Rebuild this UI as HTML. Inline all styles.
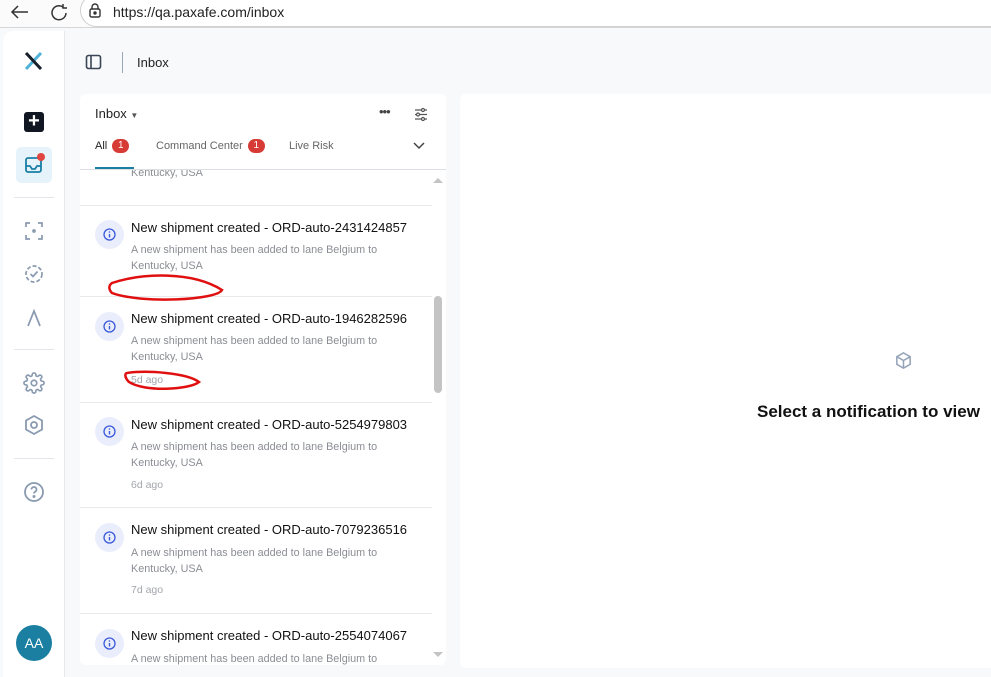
<!DOCTYPE html>
<html><head><meta charset="utf-8"><style>
*{box-sizing:border-box;margin:0;padding:0}
html,body{width:991px;height:677px;overflow:hidden}
body{background:#f8f9fb;font-family:"Liberation Sans",sans-serif;position:relative}
.abs{position:absolute}
.bar{left:0;top:0;width:991px;height:28px;background:#fbfbfb;border-bottom:1px solid #d6d6d6}
.url{left:80px;top:-6px;width:911px;height:33px;border:1px solid #d0d0d0;border-right:none;border-radius:17px 0 0 17px;background:#fff}
.side{left:3px;top:31px;width:62px;height:646px;background:#fff;border-right:1px solid #e6e8ec;border-top-left-radius:10px}
.sep{left:14px;width:40px;height:1px;background:#e3e6ea}
.panel{left:80px;top:94px;width:366px;height:571px;background:#fff;border-radius:6px;overflow:hidden}
.right{left:460px;top:94px;width:531px;height:574px;background:#fff;border-radius:6px 0 0 6px}
.item{position:absolute;left:0;width:352px;border-top:1px solid #e8e9ec}
.ic{position:absolute;left:15px;width:29px;height:29px;border-radius:50%;background:#eaedfc}
.ic svg{position:absolute;left:8px;top:8px}
.t{position:absolute;left:51px;font-size:13px;color:#111;white-space:nowrap}
.d{position:absolute;left:51px;font-size:10.8px;color:#8a8d93;line-height:16px;white-space:nowrap}
.a{position:absolute;left:51px;font-size:10.5px;color:#a3a6ab}
.badge{display:inline-block;width:17px;height:14px;border-radius:7px;background:#d63b36;color:#fff;font-size:10px;text-align:center;line-height:14px;vertical-align:1px;margin-left:5px}
</style></head><body>
<div class="abs bar"></div>
<div class="abs url"></div>
<svg class="abs" style="left:8px;top:3px" width="70" height="20" viewBox="0 0 70 20" fill="none" stroke="#333" stroke-width="1.5"><path d="M20 9H4M10 3L4 9l6 6"/><path d="M55 4a7 7 0 1 0 3 6" /><path d="M55 1v4h4"/></svg>
<svg class="abs" style="left:88px;top:3px" width="14" height="16" viewBox="0 0 14 16" fill="none" stroke="#333" stroke-width="1.4"><rect x="2" y="6" width="10" height="8" rx="1.5"/><path d="M4 6V4a3 3 0 0 1 6 0v2"/><circle cx="7" cy="10" r="1" fill="#333"/></svg>
<div class="abs" style="left:113px;top:4px;font-size:14px;color:#222">https://qa.paxafe.com/inbox</div>

<div class="abs side"></div>
<svg class="abs" style="left:24px;top:52px" width="20" height="18" viewBox="0 0 20 18"><path d="M17 1L2 17" stroke="#4fb3d9" stroke-width="3"/><path d="M2 1l15 16" stroke="#17202b" stroke-width="3"/></svg>
<div class="abs" style="left:24px;top:112px;width:20px;height:20px;background:#111722;border-radius:3px;color:#fff;font-size:20px;line-height:19px;text-align:center;font-weight:bold">+</div>
<div class="abs" style="left:16px;top:147px;width:36px;height:36px;background:#e6f3fa;border-radius:5px"></div>
<svg class="abs" style="left:24px;top:155px" width="22" height="20" viewBox="0 0 22 20" fill="none" stroke="#1a7fa5" stroke-width="1.8"><rect x="2" y="3" width="15" height="14" rx="2"/><path d="M2 11h4l2 3h3l2-3h4"/></svg>
<div class="abs" style="left:37px;top:153px;width:8px;height:8px;border-radius:50%;background:#e0463f"></div>
<div class="abs sep" style="top:197px"></div>
<svg class="abs" style="left:24px;top:221px" width="20" height="20" viewBox="0 0 20 20" fill="none" stroke="#8a9ab0" stroke-width="1.7"><path d="M2 6V2h4M14 2h4v4M18 14v4h-4M6 18H2v-4"/><circle cx="10" cy="10" r="1" fill="#8a9ab0"/></svg>
<svg class="abs" style="left:23px;top:263px" width="22" height="22" viewBox="0 0 22 22" fill="none" stroke="#8a9ab0" stroke-width="1.7"><circle cx="11" cy="11" r="8" stroke-dasharray="4 2"/><path d="M7.5 11l2.5 2.5 4.5-5"/></svg>
<svg class="abs" style="left:26px;top:309px" width="16" height="18" viewBox="0 0 16 18" fill="none" stroke="#8a9ab0" stroke-width="1.7"><path d="M2 17L8 2l6 15"/></svg>
<div class="abs sep" style="top:349px"></div>
<svg class="abs" style="left:23px;top:372px" width="22" height="22" viewBox="0 0 24 24" fill="none" stroke="#8a9ab0" stroke-width="1.8"><circle cx="12" cy="12" r="3"/><path d="M19.4 15a1.7 1.7 0 0 0 .3 1.8l.1.1a2 2 0 1 1-2.8 2.8l-.1-.1a1.7 1.7 0 0 0-2.9 1.2V21a2 2 0 1 1-4 0v-.1a1.7 1.7 0 0 0-2.9-1.2l-.1.1a2 2 0 1 1-2.8-2.8l.1-.1A1.7 1.7 0 0 0 3.1 14H3a2 2 0 1 1 0-4h.1a1.7 1.7 0 0 0 1.2-2.9l-.1-.1a2 2 0 1 1 2.8-2.8l.1.1A1.7 1.7 0 0 0 10 3.1V3a2 2 0 1 1 4 0v.1a1.7 1.7 0 0 0 2.9 1.2l.1-.1a2 2 0 1 1 2.8 2.8l-.1.1A1.7 1.7 0 0 0 20.9 10H21a2 2 0 1 1 0 4h-.1a1.7 1.7 0 0 0-1.5 1z"/></svg>
<svg class="abs" style="left:23px;top:414px" width="22" height="22" viewBox="0 0 22 22" fill="none" stroke="#8a9ab0" stroke-width="1.8"><path d="M11 2l8 4.5v9L11 20l-8-4.5v-9z"/><circle cx="11" cy="11" r="3"/></svg>
<div class="abs sep" style="top:458px"></div>
<svg class="abs" style="left:23px;top:481px" width="22" height="22" viewBox="0 0 22 22" fill="none" stroke="#8a9ab0" stroke-width="1.8"><circle cx="11" cy="11" r="9"/><path d="M8.5 8.5a2.5 2.5 0 1 1 3.5 2.3c-.7.4-1 .9-1 1.7"/><circle cx="11" cy="15.5" r=".6" fill="#8a9ab0"/></svg>
<div class="abs" style="left:16px;top:625px;width:36px;height:36px;border-radius:50%;background:#1a7fa0;color:#fff;font-size:14px;line-height:36px;text-align:center">AA</div>

<svg class="abs" style="left:85px;top:54px" width="18" height="17" viewBox="0 0 18 17" fill="none" stroke="#3a4556" stroke-width="1.6"><rect x="1.5" y="1.5" width="14" height="13" rx="2"/><path d="M6 1.5v13"/></svg>
<div class="abs" style="left:122px;top:52px;width:1px;height:21px;background:#9aa7b8"></div>
<div class="abs" style="left:137px;top:55px;font-size:13px;color:#222">Inbox</div>

<div class="abs right"></div>
<svg class="abs" style="left:894px;top:351px" width="19" height="19" viewBox="0 0 20 20" fill="none" stroke="#94a3b8" stroke-width="1.6"><path d="M10 2l7 4v8l-7 4-7-4V6z"/><path d="M3 6l7 4 7-4M10 10v8"/></svg>
<div class="abs" style="left:757px;top:402px;font-size:17px;font-weight:bold;color:#111;white-space:nowrap">Select a notification to view</div>

<svg width="0" height="0" style="position:absolute"><defs><g id="i"><circle cx="6.5" cy="6.5" r="5.5" fill="none" stroke="#3b5bdb" stroke-width="1.3"/><path d="M6.5 6v3.5" stroke="#3b5bdb" stroke-width="1.4"/><circle cx="6.5" cy="4" r=".8" fill="#3b5bdb"/></g></defs></svg>

<div class="abs panel">
 <div class="abs" style="left:15px;top:12px;font-size:13px;color:#222">Inbox <span style="font-size:8px;color:#555">▼</span></div>
 <div class="abs" style="left:299px;top:10px;font-size:13px;color:#444;letter-spacing:-1px">•••</div>
 <svg class="abs" style="left:334px;top:13px" width="14" height="15" viewBox="0 0 14 15" fill="none" stroke="#555" stroke-width="1.2"><path d="M1 3h12M1 7.5h12M1 12h12"/><circle cx="9" cy="3" r="1.5" fill="#fff"/><circle cx="4" cy="7.5" r="1.5" fill="#fff"/><circle cx="9" cy="12" r="1.5" fill="#fff"/></svg>
 <div class="abs" style="left:15px;top:45px;font-size:11px;color:#222">All<span class="badge">1</span></div>
 <div class="abs" style="left:76px;top:45px;font-size:11px;color:#666">Command Center<span class="badge">1</span></div>
 <div class="abs" style="left:209px;top:46px;font-size:11px;color:#666">Live Risk</div>
 <svg class="abs" style="left:333px;top:48px" width="12" height="8" viewBox="0 0 12 8" fill="none" stroke="#444" stroke-width="1.5"><path d="M1 1l5 5 5-5"/></svg>
 <div class="abs" style="left:15px;top:73px;width:39px;height:2px;background:#1a7fa0"></div>
 <div class="abs" style="left:0;top:75px;width:366px;height:1px;background:#dcdfe4"></div>
 <div class="abs" style="left:0;top:76px;width:366px;height:495px;overflow:hidden">
  <div class="d" style="top:-5px">Kentucky, USA</div>
  <div class="item" style="top:35px;height:91px"><div class="ic" style="top:14px"><svg width="13" height="13"><use href="#i"/></svg></div><div class="t" style="top:14px">New shipment created - ORD-auto-2431424857</div><div class="d" style="top:36px">A new shipment has been added to lane Belgium to<br>Kentucky, USA</div></div>
  <div class="item" style="top:126px;height:106px"><div class="ic" style="top:15px"><svg width="13" height="13"><use href="#i"/></svg></div><div class="t" style="top:14px">New shipment created - ORD-auto-1946282596</div><div class="d" style="top:36px">A new shipment has been added to lane Belgium to<br>Kentucky, USA</div><div class="a" style="top:77px">5d ago</div></div>
  <div class="item" style="top:232px;height:105px"><div class="ic" style="top:14px"><svg width="13" height="13"><use href="#i"/></svg></div><div class="t" style="top:14px">New shipment created - ORD-auto-5254979803</div><div class="d" style="top:36px">A new shipment has been added to lane Belgium to<br>Kentucky, USA</div><div class="a" style="top:76px">6d ago</div></div>
  <div class="item" style="top:337px;height:106px"><div class="ic" style="top:15px"><svg width="13" height="13"><use href="#i"/></svg></div><div class="t" style="top:14px">New shipment created - ORD-auto-7079236516</div><div class="d" style="top:37px">A new shipment has been added to lane Belgium to<br>Kentucky, USA</div><div class="a" style="top:76px">7d ago</div></div>
  <div class="item" style="top:443px;height:52px"><div class="ic" style="top:15px"><svg width="13" height="13"><use href="#i"/></svg></div><div class="t" style="top:14px">New shipment created - ORD-auto-2554074067</div><div class="d" style="top:37px">A new shipment has been added to lane Belgium to</div></div>
 </div>
 <div class="abs" style="left:354px;top:202px;width:8px;height:97px;border-radius:4px;background:#c4c4c4"></div>
 <div class="abs" style="left:353px;top:84px;width:0;height:0;border-left:5px solid transparent;border-right:5px solid transparent;border-bottom:5px solid #c4c4c4"></div>
 <div class="abs" style="left:353px;top:558px;width:0;height:0;border-left:5px solid transparent;border-right:5px solid transparent;border-top:5px solid #c4c4c4"></div>
</div>
<svg class="abs" style="left:0;top:0" width="991" height="677" fill="none" stroke="#e01010" stroke-width="2.5">
<path d="M112 283c30-10 80-12 110 7c-5 10-80 14-110 3c-4-4-3-8 0-10z"/>
<path d="M127 373c20-3 60 0 72 9c-10 8-55 10-70 0c-5-5-4-9-2-9z"/>
</svg>
</body></html>
